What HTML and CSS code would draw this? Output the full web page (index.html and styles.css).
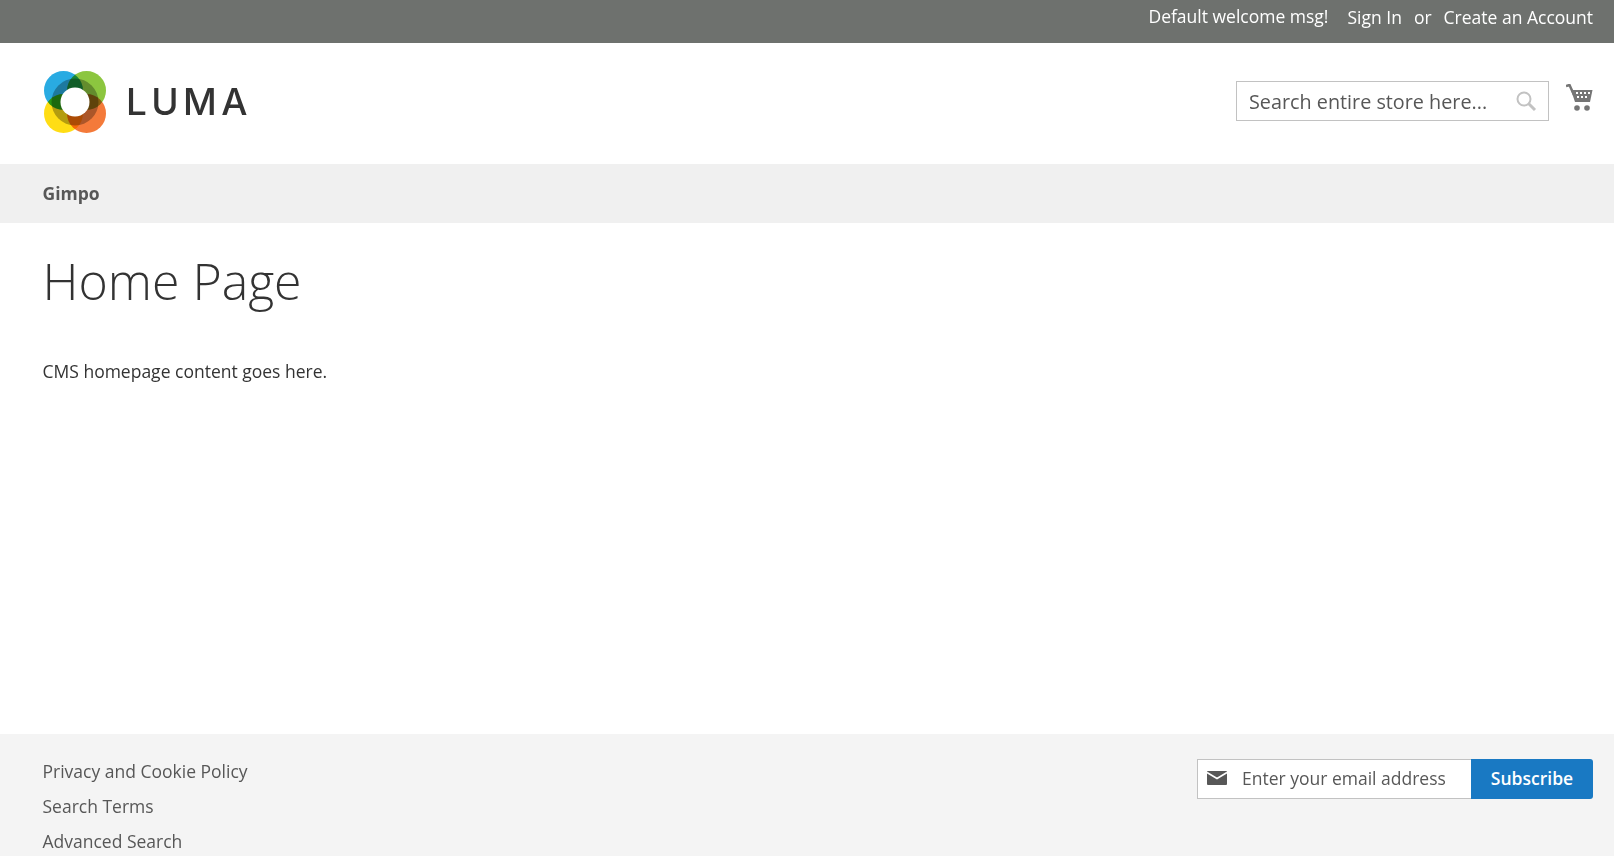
FILE: index.html
```html
<!DOCTYPE html>
<html lang="en">
<head>
  <meta charset="UTF-8" />
  <title>Home Page</title>
  <link rel="stylesheet" href="styles.css">
</head>
<body>
  <div class="panel">
    <ul class="header-links">
      <li class="welcome">Default welcome msg!</li>
      <li><a href="#">Sign In</a></li>
      <li class="or">or</li>
      <li><a href="#">Create an Account</a></li>
    </ul>
  </div>

  <header class="header">
    <a href="#" class="logo">
      <svg class="logo-mark" width="62" height="62" viewBox="0 0 62 62">
        <g class="logo-circles">
          <circle cx="19.5" cy="19.5" r="19.5" fill="#29abe2" />
          <circle cx="42.5" cy="19.5" r="19.5" fill="#8cc63f" />
          <circle cx="19.5" cy="42.5" r="19.5" fill="#ffdd15" />
          <circle cx="42.5" cy="42.5" r="19.5" fill="#f47a3a" />
          <circle cx="31" cy="31" r="23.5" fill="#b4b4b4" />
        </g>
        <circle cx="31" cy="31" r="14.5" fill="#fff" />
      </svg>
      <span class="logo-text">LUMA</span>
    </a>
    <div class="header-tools">
      <form class="search">
        <input type="text" placeholder="Search entire store here..." />
        <svg width="22" height="22" viewBox="0 0 22 22" fill="none" stroke="#c2c2c2">
          <circle cx="9" cy="9" r="6.5" stroke-width="2" />
          <path d="M13.5 13.5 L20 20" stroke-width="3" />
        </svg>
      </form>
      <a href="#" class="cart">
        <svg width="27" height="28" viewBox="0 0 27 28">
          <path d="M0 2 L3.5 1 L8 11" fill="none" stroke="#757575" stroke-width="2.5" />
          <path d="M5 6 H26.5 L24 18 H9 Z" fill="#757575" />
          <path d="M10 9 h2 M14 9 h2 M18 9 h2 M22 9 h2 M11 13 h2 M15 13 h2 M19 13 h2" stroke="#fff" stroke-width="2" />
          <circle cx="11" cy="24" r="2.8" fill="#757575" />
          <circle cx="21" cy="24" r="2.8" fill="#757575" />
        </svg>
      </a>
    </div>
  </header>

  <nav class="nav">
    <a href="#">Gimpo</a>
  </nav>

  <main class="main">
    <h1>Home Page</h1>
    <p>CMS homepage content goes here.</p>
  </main>

  <footer class="footer">
    <ul class="footer-links">
      <li><a href="#">Privacy and Cookie Policy</a></li>
      <li><a href="#">Search Terms</a></li>
      <li><a href="#">Advanced Search</a></li>
    </ul>
    <form class="subscribe">
      <div class="email">
        <svg width="20" height="14" viewBox="0 0 20 14">
          <rect width="20" height="14" rx="1" fill="#575757" />
          <path d="M0 1.5 L10 7.5 L20 1.5" fill="none" stroke="#fff" stroke-width="1.6" />
        </svg>
        <input type="email" placeholder="Enter your email address" />
      </div>
      <button type="button">Subscribe</button>
    </form>
  </footer>
</body>
</html>
```

FILE: styles.css
```css
* {
  margin: 0;
  padding: 0;
  box-sizing: border-box;
}
html, body {
  height: 856px;
  overflow: hidden;
}
body {
  font-family: 'Open Sans', sans-serif;
  font-size: 17.5px;
  color: #333;
  background-color: #fff;
  display: flex;
  flex-direction: column;
}
a {
  color: inherit;
  text-decoration: none;
}
ul {
  list-style: none;
}

/* Top panel */
.panel {
  height: 43px;
  flex-shrink: 0;
  background-color: #6e716e;
  color: #fff;
  padding: 0 21px;
}
.header-links {
  display: flex;
  justify-content: flex-end;
  align-items: center;
  height: 35px;
  line-height: 35px;
}
.welcome {
  margin-right: 19px;
  position: relative;
  top: -1px;
}
.or {
  margin: 0 12px;
}

/* Header */
.header {
  height: 121px;
  flex-shrink: 0;
  display: flex;
  justify-content: space-between;
  padding: 0 21px 0 44px;
}
.logo {
  display: flex;
  align-items: center;
  height: 118px;
}
.logo-circles {
  isolation: isolate;
}
.logo-circles circle {
  mix-blend-mode: multiply;
}
.logo-text {
  font-family: 'Inter', sans-serif;
  font-size: 37px;
  font-weight: 500;
  letter-spacing: 4.4px;
  color: #333;
  margin-left: 20px;
  position: relative;
  top: -1px;
}
.header-tools {
  display: flex;
  align-items: flex-start;
  padding-top: 38px;
}
.search {
  width: 313px;
  height: 40px;
  display: flex;
  align-items: center;
  border: 1px solid #c2c2c2;
  padding: 0 11px 0 12px;
}
input {
  flex: 1;
  min-width: 0;
  border: 0;
  outline: 0;
  background: transparent;
  font-family: inherit;
  font-size: 19.8px;
}
input::placeholder {
  color: #575757;
  opacity: 1;
}
.cart {
  margin: 3px 0 0 17px;
}

/* Nav */
.nav {
  height: 59px;
  flex-shrink: 0;
  display: flex;
  align-items: center;
  background-color: #f0f0f0;
  padding: 0 42.5px 2px;
  color: #575757;
  font-weight: 700;
}

/* Main */
.main {
  flex: 1;
  padding: 0 42.5px;
}
h1 {
  font-size: 50px;
  font-weight: 300;
  line-height: 1.1;
  margin-top: 31px;
  color: #333;
}
.main p {
  margin-top: 50px;
}

/* Footer */
.footer {
  height: 122px;
  flex-shrink: 0;
  display: flex;
  justify-content: space-between;
  align-items: flex-start;
  background-color: #f4f4f4;
  padding: 25px 21px 0 42.5px;
  color: #575757;
}
.footer-links li {
  height: 35px;
  line-height: 24px;
}
.subscribe {
  display: flex;
  height: 40px;
}
.email {
  width: 274px;
  display: flex;
  align-items: center;
  gap: 15px;
  padding: 0 0 2px 9px;
  background-color: #fff;
  border: 1px solid #c2c2c2;
  border-right: 0;
}
.email input {
  font-size: 17.5px;
}
.subscribe button {
  width: 122px;
  border: 0;
  border-radius: 0 3px 3px 0;
  background-color: #1979c3;
  color: #fff;
  font-family: inherit;
  font-size: 17.5px;
  font-weight: 600;
  padding-bottom: 2px;
}
```
